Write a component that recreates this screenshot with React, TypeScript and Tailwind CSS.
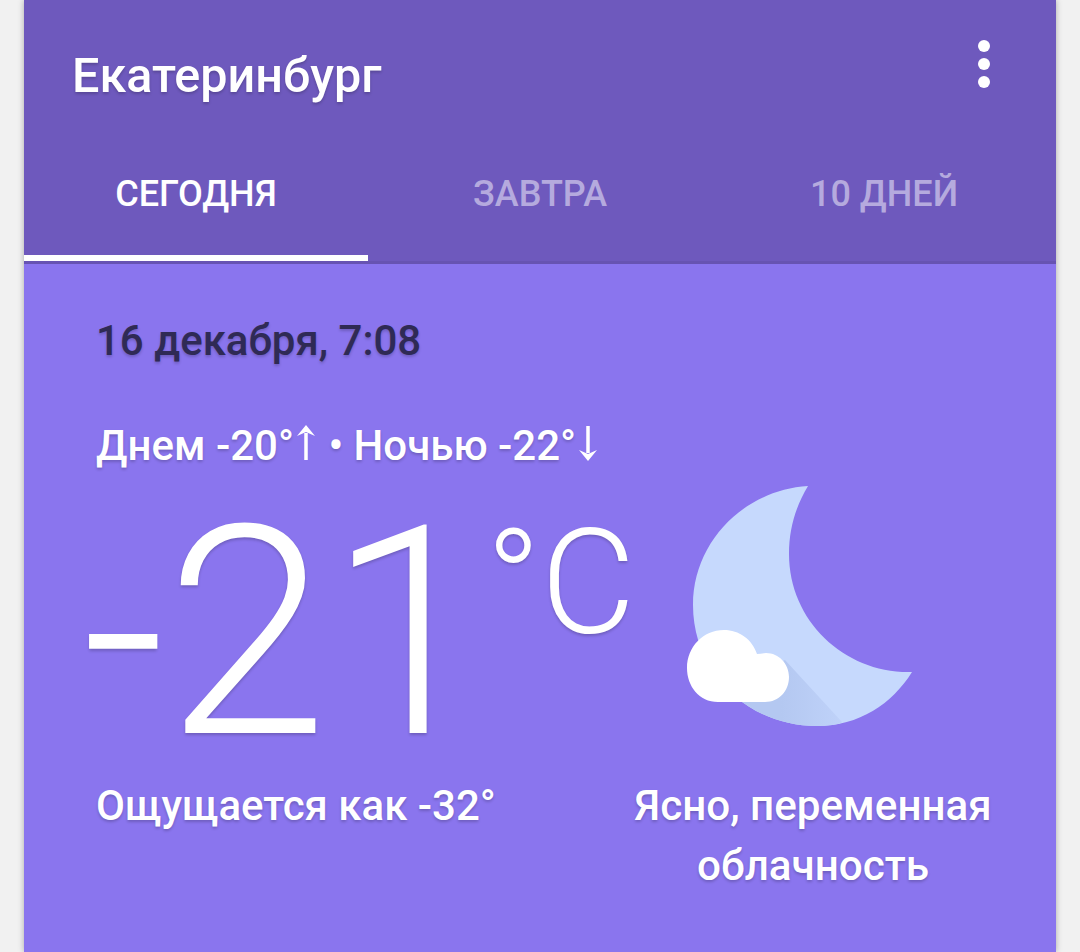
const shadow = "[text-shadow:0_2px_3px_rgba(0,0,0,0.2)]";

function Moon() {
  return (
    <svg width="280" height="270" viewBox="0 0 280 270" className="shrink-0">
      <defs>
        <clipPath id="moon">
          <path d="M148 16 C84 20 33 72 33 135 C33 203 88 256 157 256 C199 256 232 234 252 202 C186 204 129 152 129 84 C129 58 136 36 148 16 Z" />
        </clipPath>
        <linearGradient id="cloud-shadow" x1="0" y1="0" x2="1" y2="0">
          <stop offset="0.5" stopColor="#b4c8f1" />
          <stop offset="1" stopColor="#bfd2f9" />
        </linearGradient>
      </defs>
      <path
        d="M148 16 C84 20 33 72 33 135 C33 203 88 256 157 256 C199 256 232 234 252 202 C186 204 129 152 129 84 C129 58 136 36 148 16 Z"
        fill="#c6d9fd"
      />
      <g clipPath="url(#moon)">
        <path d="M125 190 L182 252 L170 262 L60 262 L60 220 Z" fill="url(#cloud-shadow)" />
      </g>
      <path
        d="M58 232 C39 232 27 216 27 198 C27 177 43 160 64 160 C79 160 92 169 97 184 C100 184 103 183 106 183 C119 183 129 194 129 207 C129 221 119 232 105 232 Z"
        fill="#ffffff"
      />
    </svg>
  );
}

function UpArrow() {
  return (
    <svg width="20" height="36" viewBox="0 0 20 36" className="mx-[2px] mb-[6px] inline-block">
      <path d="M10 35 L10 8" stroke="#fff" strokeWidth="3.5" fill="none" />
      <path d="M10 0 L19 11 L10 7 L1 11 Z" fill="#fff" />
    </svg>
  );
}

function DownArrow() {
  return (
    <svg width="20" height="36" viewBox="0 0 20 36" className="ml-[2px] mb-[6px] inline-block">
      <path d="M10 1 L10 28" stroke="#fff" strokeWidth="3.5" fill="none" />
      <path d="M10 36 L19 25 L10 29 L1 25 Z" fill="#fff" />
    </svg>
  );
}

export default function App() {
  return (
    <div className="h-[952px] w-[1080px] overflow-hidden bg-[#f1f1f1] px-[24px] font-['Roboto',sans-serif]">
      <div className="h-full w-[1032px] bg-[#8a75ee] shadow-[0_0_6px_rgba(0,0,0,0.3)]">
        {/* Header */}
        <div className="h-[264px] border-b-[3px] border-[#6753b2] bg-[#6e59bd]">
          <div className="flex h-[150px] items-start justify-between pr-[66px] pl-[48px]">
            <h1 className={`mt-[46px] text-[48.5px] leading-[60px] font-medium text-white ${shadow}`}>
              Екатеринбург
            </h1>
            <div className="mt-[40px] flex flex-col gap-[6px]">
              <span className="block h-[12px] w-[12px] rounded-full bg-white" />
              <span className="block h-[12px] w-[12px] rounded-full bg-white" />
              <span className="block h-[12px] w-[12px] rounded-full bg-white" />
            </div>
          </div>
          <div className="grid h-[111px] grid-cols-3 text-[36px] leading-[40px] font-medium">
            <div className="flex h-full flex-col items-center border-b-[6px] border-white text-white">
              <span className="mt-[24px]">СЕГОДНЯ</span>
            </div>
            <div className="flex flex-col items-center text-[#b5aade]">
              <span className="mt-[24px]">ЗАВТРА</span>
            </div>
            <div className="flex flex-col items-center text-[#b5aade]">
              <span className="mt-[24px]">10 ДНЕЙ</span>
            </div>
          </div>
        </div>

        {/* Body */}
        <div className="pl-[72px]">
          <div className={`mt-[52px] text-[42px] leading-[50px] font-medium text-[#2f2a55] ${shadow}`}>
            16 декабря, 7:08
          </div>
          <div className={`mt-[55px] flex items-center text-[42px] leading-[50px] font-medium whitespace-pre text-white ${shadow}`}>
            Днем -20°<UpArrow /> • Ночью -22°<DownArrow />
          </div>
          <div className="mt-[12px] flex h-[280px] items-start">
            <div className={`-ml-[14px] flex w-[604px] items-start text-white ${shadow}`}>
              <span className="mt-[30px] text-[292px] leading-[240px] font-light">-21</span>
              <span className="mt-[16px] -ml-[4px] text-[146px] leading-[170px] font-light">°C</span>
            </div>
            <div className="-mt-[13px] -ml-[26px]">
              <Moon />
            </div>
          </div>
          <div className={`mt-[13px] flex items-start text-[42px] leading-[60px] font-medium text-white ${shadow}`}>
            <div className="w-[538px]">Ощущается как -32°</div>
            <div className="w-[358px] text-center text-[42.2px]">Ясно, переменная облачность</div>
          </div>
        </div>
      </div>
    </div>
  );
}
